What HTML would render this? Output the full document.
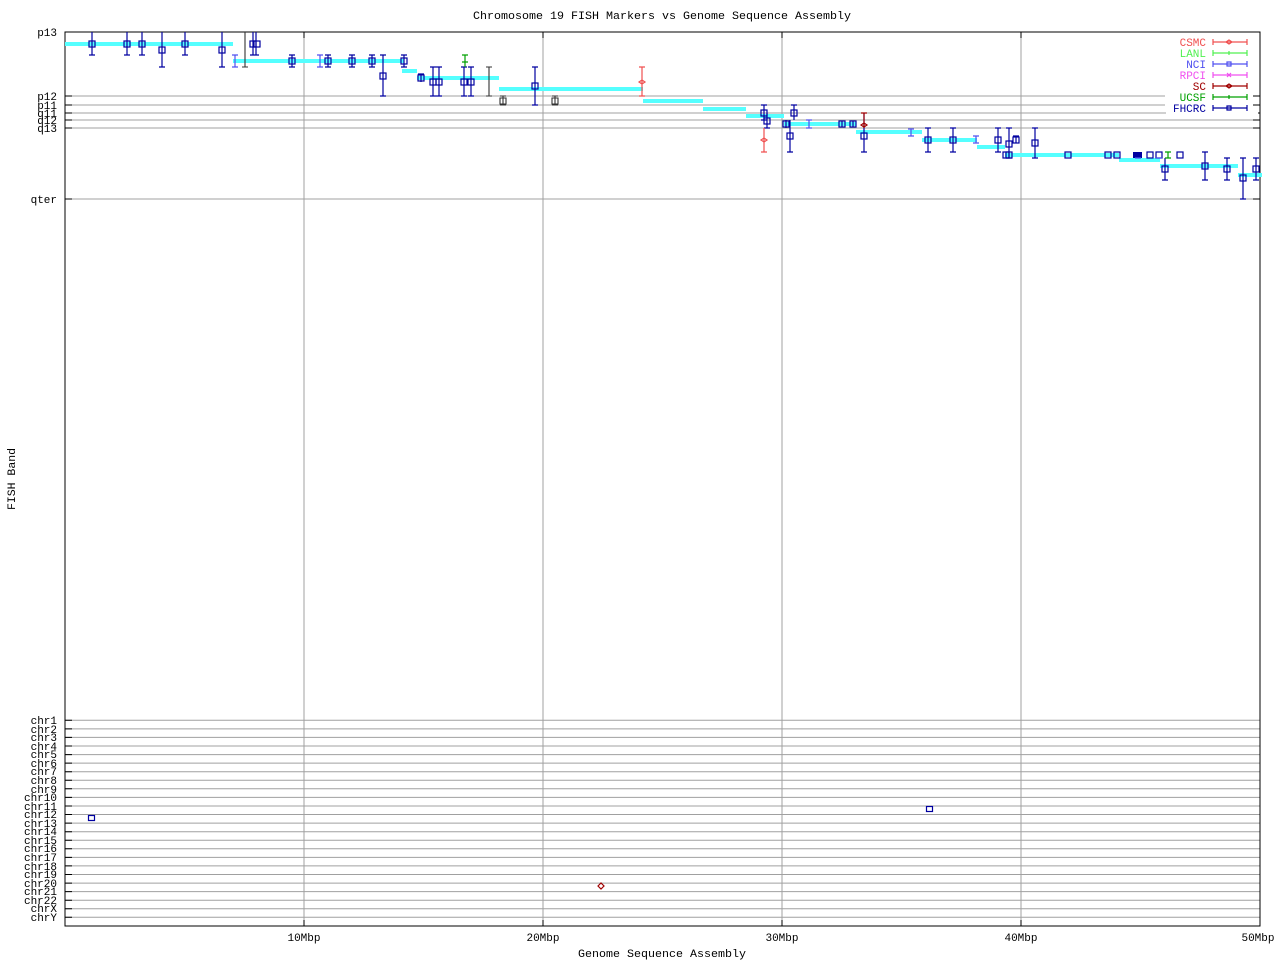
<!DOCTYPE html>
<html><head><meta charset="utf-8"><style>
html,body{margin:0;padding:0;background:#fff;}
svg{display:block;}
text{font-family:"Liberation Mono","DejaVu Sans Mono",monospace;font-size:11px;fill:#000;}
.g{stroke:#a0a0a0;stroke-width:1;fill:none}
.k{stroke:#000;stroke-width:1;fill:none}
.cy{stroke:#55ffff;stroke-width:4;fill:none}
.b{stroke:#0000a0;stroke-width:1.2;fill:none}
.lb{stroke:#5050f0;stroke-width:1.2;fill:none}
.r{stroke:#f05050;stroke-width:1.2;fill:none}
.dr{stroke:#a00000;stroke-width:1.2;fill:none}
.gr{stroke:#00a000;stroke-width:1.2;fill:none}
.ln{stroke:#50f050;stroke-width:1.2;fill:none}
.pk{stroke:#f050f0;stroke-width:1.2;fill:none}
.gy{stroke:#333;stroke-width:1.1;fill:none}
</style></head><body>
<svg width="1280" height="960" viewBox="0 0 1280 960" xmlns="http://www.w3.org/2000/svg">
<rect width="1280" height="960" fill="#fff"/>
<text x="662" y="19" text-anchor="middle" textLength="378" lengthAdjust="spacingAndGlyphs">Chromosome 19 FISH Markers vs Genome Sequence Assembly</text>
<text x="662" y="957" text-anchor="middle" textLength="168" lengthAdjust="spacingAndGlyphs">Genome Sequence Assembly</text>
<text transform="translate(15,479) rotate(-90)" text-anchor="middle" textLength="62" lengthAdjust="spacingAndGlyphs">FISH Band</text>

<path class="g" d="M304 32V926M543 32V926M782 32V926M1021 32V926"/>
<path class="g" d="M65 96H1165M65 105H1165M65 113H1260M65 120H1260M65 128H1260M65 199H1260"/>
<path class="g" d="M65 720.3H1260M65 728.9H1260M65 737.4H1260M65 746H1260M65 754.6H1260M65 763.1H1260M65 771.7H1260M65 780.3H1260M65 788.8H1260M65 797.4H1260M65 806H1260M65 814.5H1260M65 823.1H1260M65 831.7H1260M65 840.2H1260M65 848.8H1260M65 857.4H1260M65 865.9H1260M65 874.5H1260M65 883.1H1260M65 891.6H1260M65 900.2H1260M65 908.8H1260M65 917.3H1260"/>
<rect x="65" y="32" width="1195" height="894" class="k"/>
<path class="k" d="M65 32h7M65 96h7M65 105h7M65 113h7M65 120h7M65 128h7M65 199h7M1253 96h7M1253 105h7M1253 113h7M1253 120h7M1253 128h7M1253 199h7
M65 720.3h7M65 728.9h7M65 737.4h7M65 746h7M65 754.6h7M65 763.1h7M65 771.7h7M65 780.3h7M65 788.8h7M65 797.4h7M65 806h7M65 814.5h7M65 823.1h7M65 831.7h7M65 840.2h7M65 848.8h7M65 857.4h7M65 865.9h7M65 874.5h7M65 883.1h7M65 891.6h7M65 900.2h7M65 908.8h7M65 917.3h7
M304 926v-6M543 926v-6M782 926v-6M1021 926v-6M304 32v6M543 32v6M782 32v6M1021 32v6"/>
<g text-anchor="end">
<text x="57" y="36">p13</text><text x="57" y="100">p12</text><text x="57" y="109">p11</text><text x="57" y="117">q11</text><text x="57" y="124">q12</text><text x="57" y="132">q13</text><text x="57" y="203">qter</text>
<text x="57" y="724">chr1</text><text x="57" y="733">chr2</text><text x="57" y="741">chr3</text><text x="57" y="750">chr4</text><text x="57" y="758">chr5</text><text x="57" y="767">chr6</text><text x="57" y="775">chr7</text><text x="57" y="784">chr8</text><text x="57" y="793">chr9</text><text x="57" y="801">chr10</text><text x="57" y="810">chr11</text><text x="57" y="818">chr12</text><text x="57" y="827">chr13</text><text x="57" y="835">chr14</text><text x="57" y="844">chr15</text><text x="57" y="852">chr16</text><text x="57" y="861">chr17</text><text x="57" y="870">chr18</text><text x="57" y="878">chr19</text><text x="57" y="887">chr20</text><text x="57" y="895">chr21</text><text x="57" y="904">chr22</text><text x="57" y="912">chrX</text><text x="57" y="921">chrY</text>
</g>
<g text-anchor="middle">
<text x="304" y="941">10Mbp</text><text x="543" y="941">20Mbp</text><text x="782" y="941">30Mbp</text><text x="1021" y="941">40Mbp</text><text x="1258" y="941">50Mbp</text>
</g>

<path class="cy" d="M65 44H233M233 61H404M402 71H417M417 78H499M499 89H643M643 101H703M703 109H746M746 116H784M784 124H856M856 132H922M922 140H977M977 147H1005M1005 155H1119M1119 160H1160M1160 166H1238M1238 175H1262"/>

<path class="b" d="
M92 32V55M89 55h6
M127 32V55M124 55h6
M142 32V55M139 55h6
M162 32V67M159 67h6
M185 32V55M182 55h6
M222 32V67M219 67h6
M253 32V55M250 55h6M256 32V55M253 55h6
M292 55V67M289 55h6M289 67h6
M328 55V67M325 55h6M325 67h6
M352 55V67M349 55h6M349 67h6
M372 55V67M369 55h6M369 67h6
M383 55V96M380 55h6M380 96h6
M404 55V67M401 55h6M401 67h6
M421 74V82M418 74h6
M433 67V96M430 67h6M430 96h6
M439 67V96M436 67h6M436 96h6
M464 67V96M461 67h6M461 96h6
M471 67V96M468 67h6M468 96h6
M535 67V105M532 67h6M532 105h6
M764 105V120M761 105h6M761 120h6
M767 113V128M764 128h6
M786 120V128
M790 120V152M787 152h6
M794 105V120M791 105h6
M842 121V127
M853 121V127
M864 113V152M861 152h6
M928 128V152M925 128h6M925 152h6
M953 128V152M950 128h6M950 152h6
M998 128V152M995 128h6M995 152h6
M1009 128V158M1006 128h6M1006 158h6
M1016 136V143M1013 136h6
M1035 128V158M1032 128h6M1032 158h6
M1165 158V180M1162 180h6
M1205 152V180M1202 152h6M1202 180h6
M1227 158V180M1224 158h6M1224 180h6
M1243 158V199M1240 158h6M1240 199h6
M1256 158V180M1253 158h6M1253 180h6
"/>
<g class="b">
<rect x="89" y="41" width="6" height="6"/><rect x="124" y="41" width="6" height="6"/><rect x="139" y="41" width="6" height="6"/><rect x="159" y="47" width="6" height="6"/><rect x="182" y="41" width="6" height="6"/><rect x="219" y="47" width="6" height="6"/><rect x="250" y="41" width="6" height="6"/><rect x="254" y="41" width="6" height="6"/>
<rect x="289" y="58" width="6" height="6"/><rect x="325" y="58" width="6" height="6"/><rect x="349" y="58" width="6" height="6"/><rect x="369" y="58" width="6" height="6"/><rect x="380" y="73" width="6" height="6"/><rect x="401" y="58" width="6" height="6"/>
<rect x="418" y="75" width="6" height="6"/><rect x="430" y="79" width="6" height="6"/><rect x="436" y="79" width="6" height="6"/><rect x="461" y="79" width="6" height="6"/><rect x="468" y="79" width="6" height="6"/>
<rect x="532" y="83" width="6" height="6"/>
<rect x="761" y="110" width="6" height="6"/><rect x="764" y="118" width="6" height="6"/><rect x="783" y="121" width="6" height="6"/><rect x="787" y="133" width="6" height="6"/><rect x="791" y="110" width="6" height="6"/>
<rect x="839" y="121" width="6" height="6"/><rect x="850" y="121" width="6" height="6"/><rect x="861" y="133" width="6" height="6"/>
<rect x="925" y="137" width="6" height="6"/><rect x="950" y="137" width="6" height="6"/><rect x="995" y="137" width="6" height="6"/><rect x="1006" y="141" width="6" height="6"/><rect x="1013" y="137" width="6" height="6"/><rect x="1032" y="140" width="6" height="6"/>
<rect x="1003" y="152" width="6" height="6"/><rect x="1006" y="152" width="6" height="6"/><rect x="1065" y="152" width="6" height="6"/><rect x="1105" y="152" width="6" height="6"/><rect x="1114" y="152" width="6" height="6"/><rect x="1147" y="152" width="6" height="6"/><rect x="1156" y="152" width="6" height="6"/><rect x="1177" y="152" width="6" height="6"/>
<rect x="1162" y="166" width="6" height="6"/><rect x="1202" y="163" width="6" height="6"/><rect x="1224" y="166" width="6" height="6"/><rect x="1240" y="175" width="6" height="6"/><rect x="1253" y="166" width="6" height="6"/>
<rect x="88.5" y="815.5" width="6" height="5"/><rect x="926.5" y="806.5" width="6" height="5"/>
</g>
<rect x="1133" y="152" width="9" height="6" fill="#0000a0"/>
<path class="gy" d="M503 96V105M500 96h6M500 105h6M555 96V105M552 96h6M552 105h6M500 98h6v6h-6zM552 98h6v6h-6z"/>
<path class="gy" d="M245 32V67M242 67h6M489 67V96M486 67h6M486 96h6"/>
<path class="lb" d="M235 55V67M232 55h6M232 67h6M320 55V67M317 55h6M317 67h6M809 120V128M806 120h6M806 128h6M911 129V136M908 129h6M908 136h6M976 136V143M973 136h6M973 143h6M1135 158h6M1156 158h6"/>
<path class="r" d="M642 67V96M639 67h6M639 96h6M764 128V152M761 152h6M639 82l3-2 3 2-3 2zM761 140l3-2 3 2-3 2z"/>
<path class="dr" d="M864 113V128M861 113h6M861 125l3-2 3 2-3 2zM598 886l3-3 3 3-3 3z"/>
<path class="gr" d="M465 55V67M462 55h6M462 62h6M1168 152V158M1165 152h6M1165 158h6"/>

<rect x="1166" y="34" width="92" height="80" fill="#fff"/>
<g text-anchor="end">
<text x="1206" y="46" style="fill:#f05050">CSMC</text>
<text x="1206" y="57" style="fill:#50f050">LANL</text>
<text x="1206" y="68" style="fill:#5050f0">NCI</text>
<text x="1206" y="79" style="fill:#f050f0">RPCI</text>
<text x="1206" y="90" style="fill:#a00000">SC</text>
<text x="1206" y="101" style="fill:#00a000">UCSF</text>
<text x="1206" y="112" style="fill:#0000a0">FHCRC</text>
</g>
<path class="r" d="M1213 42H1247M1213 39v6M1247 39v6M1226 42l3-2 3 2-3 2z"/>
<path class="ln" d="M1213 53H1247M1213 50v6M1247 50v6M1229 51v4"/>
<path class="lb" d="M1213 64H1247M1213 61v6M1247 61v6M1227 62h4v4h-4z"/>
<path class="pk" d="M1213 75H1247M1213 72v6M1247 72v6M1227 73l4 4M1231 73l-4 4"/>
<path class="dr" d="M1213 86H1247M1213 83v6M1247 83v6M1226 86l3-2 3 2-3 2z"/>
<path class="gr" d="M1213 97H1247M1213 94v6M1247 94v6M1229 95v4"/>
<path class="b" d="M1213 108H1247M1213 105v6M1247 105v6M1227 106h4v4h-4z"/>
<path class="k" d="M1253 96h7M1253 105h7"/>
</svg>
</body></html>
